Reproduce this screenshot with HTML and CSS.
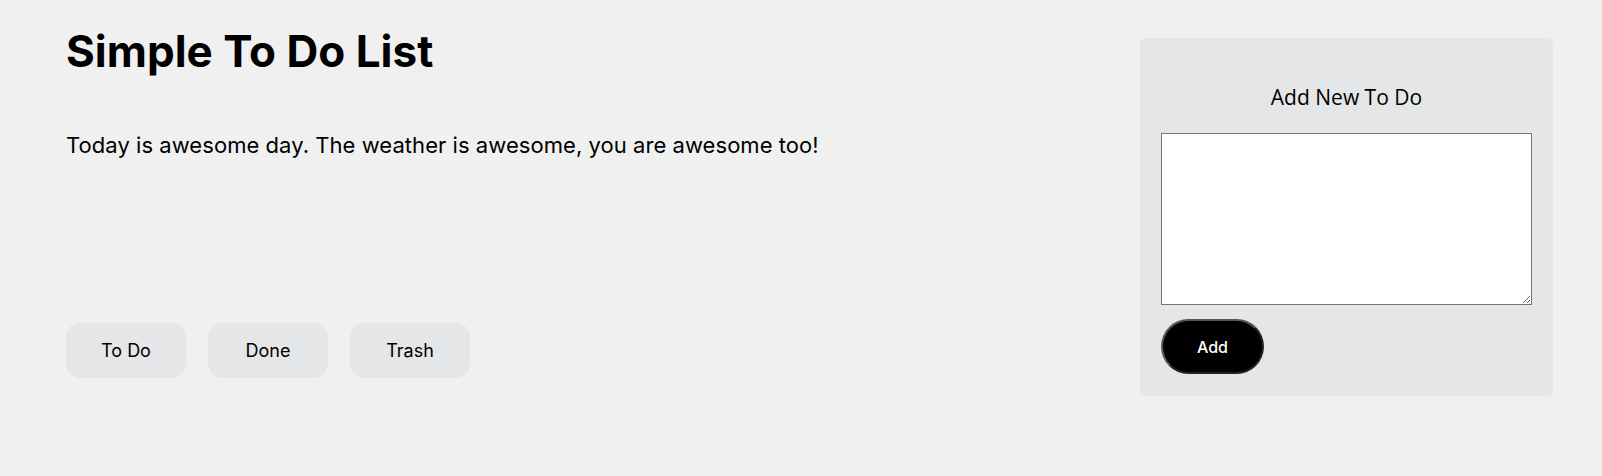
FILE: index.html
```html
<!DOCTYPE html>
<html lang="en">
<head>
<meta charset="utf-8">
<title>Simple To Do List</title>
<link rel="stylesheet" href="styles.css">
</head>
<body>
<div class="page">
  <main class="main">
    <h1 class="title">Simple To Do List</h1>
    <p class="intro">Today is awesome day. The weather is awesome, you are awesome too!</p>
    <div class="tabs">
      <button class="tab">To Do</button>
      <button class="tab">Done</button>
      <button class="tab">Trash</button>
    </div>
  </main>
  <aside class="card">
    <h2 class="card-title">Add New To Do</h2>
    <textarea class="input"></textarea>
    <div class="actions">
      <button class="add">Add</button>
    </div>
  </aside>
</div>
</body>
</html>
```

FILE: styles.css
```css
html, body {
  margin: 0;
  padding: 0;
  background: #f0f0f0;
}
body {
  font-family: Inter, "Liberation Sans", sans-serif;
  color: #000;
}
.page {
  display: flex;
  justify-content: space-between;
  align-items: flex-start;
  padding: 38px 49px 0 66px;
}
.main {
  display: flex;
  flex-direction: column;
}
.title {
  margin: -13px 0 0 0;
  font-size: 44px;
  font-weight: 700;
  line-height: 53px;
}
.intro {
  margin: 54px 0 0 0;
  font-size: 22px;
  line-height: 26px;
  letter-spacing: 0.05px;
}
.tabs {
  display: flex;
  gap: 22px;
  margin-top: 165px;
}
.tab {
  width: 120px;
  height: 55px;
  border: none;
  border-radius: 14px;
  background: #e5e6e8;
  font-family: Inter, "Liberation Sans", sans-serif;
  font-size: 18px;
  color: #000;
  padding: 0;
}
.card {
  width: 413px;
  box-sizing: border-box;
  background: #e5e6e8;
  border-radius: 6px;
  padding: 0 21px 22px;
  display: flex;
  flex-direction: column;
}
.card-title {
  margin: 44px 0 0;
  text-align: center;
  font-family: "Open Sans", "Noto Sans", sans-serif;
  font-weight: 400;
  font-size: 21px;
  line-height: 30px;
}
.input {
  margin-top: 21px;
  width: 100%;
  height: 172px;
  box-sizing: border-box;
  border: 1px solid #767676;
  background: #fff;
  resize: both;
}
.actions {
  display: flex;
  margin-top: 14px;
}
.add {
  width: 103px;
  height: 55px;
  border-radius: 28px;
  background: #000;
  color: #fff;
  border: 2px solid #555;
  border-right-color: #222;
  border-bottom-color: #222;
  font-family: Inter, "Liberation Sans", sans-serif;
  font-size: 16px;
  font-weight: 500;
  padding: 0;
}
```
